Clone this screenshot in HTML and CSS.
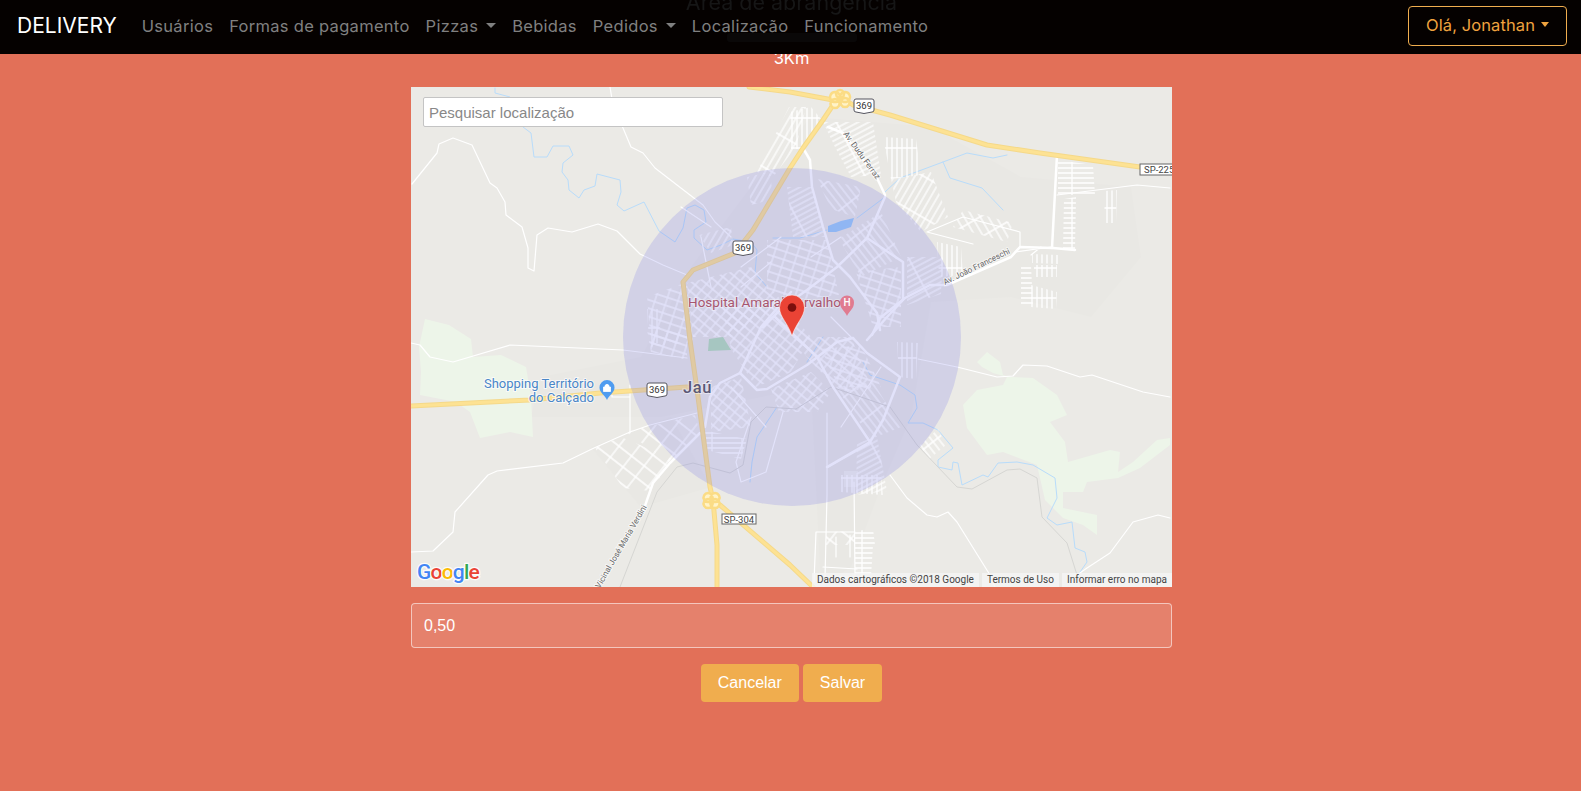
FILE: index.html
```html
<!DOCTYPE html>
<html lang="pt-BR">
<head>
<meta charset="utf-8">
<title>Delivery - Área de abrangência</title>
<link rel="stylesheet" href="styles.css">
</head>
<body>
<nav class="navbar">
  <a class="brand" href="#">DELIVERY</a>
  <ul class="nav-list">
    <li><a href="#">Usuários</a></li>
    <li><a href="#">Formas de pagamento</a></li>
    <li><a href="#" class="has-caret">Pizzas</a></li>
    <li><a href="#">Bebidas</a></li>
    <li><a href="#" class="has-caret">Pedidos</a></li>
    <li><a href="#">Localização</a></li>
    <li><a href="#">Funcionamento</a></li>
  </ul>
  <button class="user-btn" type="button">Olá, Jonathan<span class="user-caret"></span></button>
</nav>
<main class="content">
  <h2 class="title">Área de abrangência</h2>
  <div class="slider"></div>
  <p class="km">3Km</p>
  <div class="map">
    <svg class="map-svg" viewBox="0 0 761 500" width="761" height="500" xmlns="http://www.w3.org/2000/svg">
      <defs>
        <pattern id="st1" width="6" height="34" patternUnits="userSpaceOnUse" patternTransform="rotate(12)"><path class="pl" d="M1 0V34M0 1H6"/></pattern>
        <pattern id="st2" width="6" height="30" patternUnits="userSpaceOnUse" patternTransform="rotate(-38)"><path class="pl" d="M1 0V30M0 1H6"/></pattern>
        <pattern id="st3" width="6" height="36" patternUnits="userSpaceOnUse" patternTransform="rotate(30)"><path class="pl" d="M1 0V36M0 1H6"/></pattern>
        <pattern id="st4" width="5" height="40" patternUnits="userSpaceOnUse" patternTransform="rotate(62)"><path class="pl" d="M1 0V40M0 1H5"/></pattern>
        <pattern id="st5" width="5" height="30" patternUnits="userSpaceOnUse"><path class="pl" d="M1 0V30M0 1H5"/></pattern>
        <pattern id="st6" width="30" height="5" patternUnits="userSpaceOnUse"><path class="pl" d="M0 1H30M1 0V5"/></pattern>
        <pattern id="gr1" width="8" height="8" patternUnits="userSpaceOnUse" patternTransform="rotate(40)"><path class="pl" d="M0 1H8M1 0V8"/></pattern>
        <pattern id="gr2" width="11" height="8" patternUnits="userSpaceOnUse" patternTransform="rotate(18)"><path class="pl" d="M0 1H11M1 0V8"/></pattern>
        <pattern id="gr3" width="16" height="14" patternUnits="userSpaceOnUse" patternTransform="rotate(38)"><path class="pl" d="M0 1H16M1 0V14"/></pattern>
        <pattern id="gr4" width="7" height="18" patternUnits="userSpaceOnUse" patternTransform="rotate(-30)"><path class="pl" d="M0 1H7M1 0V18"/></pattern>
      </defs>
      <rect class="land" width="761" height="500"/>
      <path class="urban" d="M400 30L520 40L610 90L720 100L730 170L680 230L600 210L520 215L500 330L470 400L440 480L410 500L400 300L250 330L120 330L130 290L230 270L280 180L340 100Z"/>
      <path class="urban" d="M180 360L260 330L300 400L230 420Z"/>
      <path class="green" d="M14 232L38 238L60 252L62 270L90 268L115 280L120 310L122 350L99 345L69 351L59 325L45 315L9 308L10 285L8 260Z"/>
      <path class="green" d="M566 275L576 265L589 275L592 288L599 290L622 291L646 308L656 328L639 335L654 355L657 375L699 363L709 365L707 385L722 375L746 353L759 351L759 358L729 381L707 391L676 395L672 405L652 405L652 421L686 428L686 448L672 438L652 431L634 413L626 378L592 365L576 368L556 341L552 318L566 303L592 298L596 290L582 286L571 280Z"/>
      <path class="park" d="M298 252L312 250L320 263L297 264Z"/>

      <path class="river" d="M84 1L84 6L99 10L112 40L120 46L123 70L136 70L142 59L158 59L162 68L152 76L151 85L157 93L158 103L168 111L173 103L184 99L186 87L209 93L210 105L206 118L213 124L233 115L248 144L264 155L272 141L276 121L284 118L293 123L295 135L283 143L283 151L296 163L310 158L322 152L340 155L346 163L344 186L356 200"/>
      <path class="river" d="M452 275L459 288L489 298L504 308L506 321L497 336L512 336L527 343L542 361L527 373L527 380L541 383L542 375L547 376L551 398L572 388L577 390L587 376L606 375L622 378L644 391L646 411L636 431L646 438L661 435L664 461L674 465L676 475L667 488"/>
      <path class="river" d="M474 105L489 91L532 75L556 66L582 71L596 68M532 75L539 91L571 101L592 123"/>
      <path class="river" d="M474 110L446 131M416 143L389 151L362 151M366 320L346 350L341 375L339 395M412 250L396 275"/>
      <path class="lake" d="M417 139L430 134L443 131L440 140L425 145L417 145Z"/>

      <g class="blocks">
        <path fill="url(#gr1)" d="M310 215L370 215L400 250L380 285L345 300L320 262Z"/>
        <path fill="url(#gr1)" d="M380 250L440 250L460 300L425 300L400 275Z"/>
        <path fill="url(#gr2)" d="M356 153L416 153L428 208L392 212L356 205Z"/>
        <path fill="url(#st4)" d="M376 100L402 100L414 150L382 150Z"/>
        <path fill="url(#st3)" d="M336 90L359 85L362 112L340 118Z"/>
        <path fill="url(#st3)" d="M346 85L378 20L395 20L385 60L362 90Z"/>
        <path fill="url(#st5)" d="M379 25L400 20L410 32L392 62L380 62Z"/>
        <path fill="url(#st2)" d="M406 92L450 100L444 130L420 122Z"/>
        <path fill="url(#st2)" d="M428 152L470 125L490 170L450 190Z"/>
        <path fill="url(#st4)" d="M496 170L532 170L530 207L496 218Z"/>
        <path fill="url(#st5)" d="M526 155L550 160L552 188L528 190Z"/>
        <path fill="url(#gr2)" d="M445 185L490 180L490 240L462 240Z"/>
        <path fill="url(#gr2)" d="M236 210L276 195L282 255L240 260Z"/>
        <path fill="url(#gr1)" d="M276 196L340 180L372 215L320 250L282 250Z"/>
        <path fill="url(#st3)" d="M288 148L320 140L322 158L300 166Z"/>
        <path fill="url(#st5)" d="M236 222L248 222L250 256L238 256Z"/>
        <path fill="url(#gr2)" d="M236 243L276 245L276 273L240 265Z"/>
        <path fill="url(#gr1)" d="M300 300L330 290L340 340L300 345Z"/>
        <path fill="url(#gr1)" d="M360 302L400 285L420 305L406 325L368 325Z"/>
        <path fill="url(#st2)" d="M425 300L462 295L490 340L460 352Z"/>
        <path fill="url(#gr2)" d="M410 262L450 258L470 300L430 305Z"/>
        <path fill="url(#st5)" d="M486 255L507 256L505 292L488 290Z"/>
        <path fill="url(#gr3)" d="M184 361L210 350L262 372L239 404L212 401Z"/>
        <path fill="url(#gr3)" d="M215 345L284 328L289 346L258 375Z"/>
        <path fill="url(#st6)" d="M292 343L336 352L330 372L292 362Z"/>
        <path fill="url(#st4)" d="M446 356L466 350L476 404L445 408Z"/>
        <path fill="url(#st5)" d="M430 388L470 388L472 408L430 405Z"/>
        <path fill="url(#st2)" d="M509 358L527 342L535 358L517 373Z"/>
        <path fill="url(#st4)" d="M412 35L462 35L470 88L440 90L424 60Z"/>
        <path fill="url(#st5)" d="M472 50L505 52L510 88L480 92Z"/>
        <path fill="url(#st3)" d="M480 92L520 85L537 130L510 145L485 115Z"/>
        <path fill="url(#gr4)" d="M552 123L602 136L596 155L542 140Z"/>
        <path fill="url(#st6)" d="M647 73L682 78L684 108L647 108Z"/>
        <path fill="url(#st5)" d="M694 104L706 103L705 136L693 136Z"/>
        <path fill="url(#st6)" d="M653 112L665 110L664 162L652 162Z"/>
        <path fill="url(#st5)" d="M621 167L647 168L647 177L621 176Z"/>
        <path fill="url(#st6)" d="M610 178L620 178L622 220L610 220Z"/>
        <path fill="url(#st5)" d="M620 198L646 205L645 222L620 220Z"/>
        <path fill="url(#st5)" d="M623 178L646 178L646 190L623 190Z"/>
        <path fill="url(#st6)" d="M444 460L462 458L460 490L444 490Z"/>
        <path fill="url(#st6)" d="M444 444L462 442L464 458L444 460Z"/>
        <path fill="url(#gr3)" d="M415 445L444 444L444 458L415 458Z"/>
        <path class="plaza" d="M433 384L447 384L447 400L433 400Z"/>
      </g>

      <g class="roads-thin">
        <path d="M1 97L26 66L28 57L42 51L61 58L79 96L86 101L94 115L95 128L111 140L117 161L117 181L123 184L126 148L137 141L161 145L187 137L206 144L229 167L252 178L276 188"/>
        <path d="M199 0L201 12L212 41L220 60L232 66L244 81L266 98L292 118L304 135L320 150"/>
        <path d="M507 272L546 280L586 290L602 289L612 278L636 279L669 290L681 288L732 305L759 310"/>
        <path d="M479 388L496 411L516 428L526 430L537 425L546 435L579 488L584 500"/>
        <path d="M666 488L676 481L699 466L722 435L747 428L759 431"/>
        <path d="M0 256L9 258L19 270L42 275L99 258L212 263L276 271"/>
        <path d="M0 465L22 464L42 445L44 425L77 388L86 384L152 376L183 361L219 345L239 338L286 326"/>
        <path d="M416 326L416 408L414 491M443 395L444 488M416 381L460 356"/>
        <path d="M201 310L219 310M201 298L201 310M219 298L219 345M646 108L726 98L759 101M516 145L552 130L609 145L609 160M516 145L562 157"/>
        <path d="M416 490L470 490M412 480L446 482M405 445L444 445M405 445L403 495M425 450L425 470M439 448L439 470"/>
        <path d="M604 165L640 160M630 160L620 168M340 330L325 375L330 395L355 385L372 325M320 300L355 340"/>
        <path d="M270 120L300 140M290 150L300 200M330 180L370 150"/>
        <path d="M430 150L400 170M360 175L330 200M470 280L430 340M420 230L450 260"/>
      </g>
      <path class="road-gray" d="M209 500L246 405L266 380L282 376L319 386L332 378L340 335L355 320L385 322M479 320L506 358L546 400L561 402L596 383L609 382L626 391L631 430L656 456L666 488L670 500M385 322L420 300L450 310L479 320"/>
      <g class="roads-main">
        <path d="M392 61L399 73L401 100L412 140L422 173L439 190L466 226L469 243"/>
        <path d="M474 110L456 151L426 180L396 203L372 220L352 240"/>
        <path d="M456 151L492 175L492 213L476 230L456 253"/>
        <path d="M536 198L519 198L494 211L469 231L461 248M536 198L600 170L609 160L642 161L664 163"/>
        <path d="M646 68L641 161"/>
        <path d="M417 40L432 46L466 91L474 108"/>
        <path d="M329 286L346 303L356 302L396 278L426 255L442 251"/>
        <path d="M442 251L456 266L489 290L472 333L459 355L416 380"/>
        <path d="M406 270L422 300L459 355"/>
        <path d="M329 286L309 296L299 310L294 340"/>
        <path d="M289 346L259 376L242 396L236 413L232 425"/>
        <path d="M380 205L350 240L329 286M364 230L406 270"/>
      </g>
      <g class="hw">
        <path class="hw-e" d="M338 0L379 5L422 13L431 11L442 18L479 28L576 58L629 66L729 80L761 84M422 18L412 33L392 61L379 81L342 143L324 166L282 183L272 195L279 253L287 310L299 400L302 413L306 458L306 500M0 319L119 313L189 306L276 300M309 418L379 478L402 500"/>
        <path class="hw-f" d="M338 0L379 5L422 13L431 11L442 18L479 28L576 58L629 66L729 80L761 84M422 18L412 33L392 61L379 81L342 143L324 166L282 183L272 195L279 253L287 310L299 400L302 413L306 458L306 500M0 319L119 313L189 306L276 300M309 418L379 478L402 500"/>
        <path class="hw-loop" d="M424 5A5 5 0 1 0 424.100 5ZM434 5A5 5 0 1 0 434.100 5ZM424 12A4.500 4.500 0 1 0 424.100 12ZM434 11A4.500 4.500 0 1 0 434.100 11ZM429 3A4 4 0 1 0 429.100 3Z"/>
        <path class="hw-loop" d="M297 406A4.500 4.500 0 1 0 297.100 406ZM304 406A4.500 4.500 0 1 0 304.100 406ZM297 412A4.500 4.500 0 1 0 297.100 412ZM304 412A4.500 4.500 0 1 0 304.100 412Z"/>
      </g>
      <circle class="radius" cx="381" cy="250" r="169"/>

      <g class="shield" transform="translate(453 19)"><path d="M-8 -7H8Q10 -7 10 -5V4Q10 6 8 6Q0 9 -8 6Q-10 6 -10 4V-5Q-10 -7 -8 -7Z"/><text y="3">369</text></g>
      <g class="shield" transform="translate(332 161)"><path d="M-8 -7H8Q10 -7 10 -5V4Q10 6 8 6Q0 9 -8 6Q-10 6 -10 4V-5Q-10 -7 -8 -7Z"/><text y="3">369</text></g>
      <g class="shield" transform="translate(246 303)"><path d="M-8 -7H8Q10 -7 10 -5V4Q10 6 8 6Q0 9 -8 6Q-10 6 -10 4V-5Q-10 -7 -8 -7Z"/><text y="3">369</text></g>
      <g class="tag"><rect x="729" y="77" width="36" height="11"/><text x="733" y="86">SP-225</text></g>
      <g class="tag"><rect x="311" y="427" width="34" height="10"/><text x="328" y="436" class="mid">SP-304</text></g>

      <text class="street" transform="translate(432 47) rotate(54)">Av. Dudu Ferraz</text>
      <text class="street" transform="translate(534 198) rotate(-26)">Av. João Franceschi</text>
      <text class="street end" transform="translate(236 420) rotate(-60)">Vicinal José Maria Verdini</text>

      <text class="poi-hosp" x="277" y="220">Hospital Amaral Carvalho</text>
      <path class="poi-h" d="M436 229C434 224 429 222 429 215.500A7 7 0 1 1 443 215.500C443 222 438 224 436 229Z"/>
      <text class="poi-h-t" x="436" y="219">H</text>
      <text class="city" x="272" y="306">Jaú</text>
      <text class="poi-shop" x="183" y="301">Shopping Território</text>
      <text class="poi-shop" x="183" y="315">do Calçado</text>
      <path class="poi-s" d="M196 313C194 308 188.500 306 188.500 300.500A7.500 7.500 0 1 1 203.500 300.500C203.500 306 198 308 196 313Z"/>
      <path class="poi-bag" d="M192.500 300H199.500V304.500H192.500ZM194 300V298.500Q196 296 198 298.500V300"/>

      <path class="pin" d="M381 249C377 236 368.500 230 368.500 220.500A12.500 12.500 0 1 1 393.500 220.500C393.500 230 385 236 381 249Z"/>
      <circle class="pin-dot" cx="381" cy="220.500" r="4.300"/>

      <text class="logo" x="6" y="492"><tspan class="g-b">G</tspan><tspan class="g-r">o</tspan><tspan class="g-y">o</tspan><tspan class="g-b">g</tspan><tspan class="g-g">l</tspan><tspan class="g-r">e</tspan></text>
    </svg>
    <input class="map-search" type="text" placeholder="Pesquisar localização">
    <div class="attribution">
      <span>Dados cartográficos ©2018 Google</span>
      <span>Termos de Uso</span>
      <span>Informar erro no mapa</span>
    </div>
  </div>
  <input class="price" type="text" value="0,50">
  <div class="actions">
    <button class="btn" type="button">Cancelar</button>
    <button class="btn" type="button">Salvar</button>
  </div>
</main>
</body>
</html>
```
FILE: styles.css
```css
* { box-sizing: border-box; }
html, body { margin: 0; padding: 0; }
body {
  background: #e27058;
  color: #fff;
  font-family: Inter, "Liberation Sans", sans-serif;
  min-height: 791px;
  overflow: hidden;
}
a { text-decoration: none; color: inherit; }

.navbar {
  position: fixed;
  top: 0; left: 0; right: 0;
  height: 54px;
  z-index: 1;
  background: #050100;
  display: flex;
  align-items: center;
  padding: 0 14px 0 17px;
}
.brand { color: #fff; font-size: 21px; line-height: 30px; margin: 0 25px 3px 0; white-space: nowrap; }
.nav-list { list-style: none; display: flex; margin: 0 auto 3px 0; padding: 0; gap: 16px; }
.nav-list a { color: #808080; font-size: 16.500px; line-height: 24px; letter-spacing: .3px; white-space: nowrap; display: flex; align-items: center; }
.has-caret::after {
  content: "";
  margin-left: 8px;
  border-top: 5px solid currentColor;
  border-left: 5px solid transparent;
  border-right: 5px solid transparent;
}
.user-btn {
  height: 40px;
  width: 159px;
  margin-bottom: 2px;
  background: transparent;
  border: 1px solid #f0ad4e;
  border-radius: 4px;
  color: #f0a33f;
  font: 16.500px/24px Inter, sans-serif;
  letter-spacing: .1px;
  padding: 0 0 3px;
  display: flex;
  align-items: center;
  justify-content: center;
}
.user-caret {
  margin-left: 6px;
  border-top: 5px solid currentColor;
  border-left: 4.500px solid transparent;
  border-right: 4.500px solid transparent;
}

.content { display: flex; flex-direction: column; align-items: center; padding-left: 2px; }
.title {
  position: relative;
  z-index: 2;
  margin: -11px 0 0;
  font-size: 21.500px;
  line-height: 26px;
  font-weight: 400;
  color: #161616;
  white-space: nowrap;
}
.slider {
  position: relative;
  z-index: 2;
  width: 130px;
  height: 9px;
  margin-top: 18px;
  background: #0a0808;
  border-radius: 3px;
}
.km { margin: 4px 0 0; font-size: 16.500px; line-height: 24px; }

.map { position: relative; width: 761px; height: 500px; margin-top: 17px; overflow: hidden; flex: none; }
.map-svg { display: block; }
.map-search {
  position: absolute;
  top: 10px; left: 12px;
  width: 300px; height: 30px;
  padding: 0 5px;
  border: 1px solid #c4c4c4;
  border-radius: 2px;
  background: #fff;
  font: 15px "Liberation Sans", Arial, sans-serif;
  color: #333;
}
.map-search::placeholder { color: #888; opacity: 1; }
.attribution { position: absolute; right: 0; bottom: 0; display: flex; gap: 3px; font: 10px/14px Roboto, sans-serif; color: #444; }
.attribution span { background: rgba(245,245,245,.8); padding: 0 5px; white-space: nowrap; }

.price {
  width: 761px;
  height: 45px;
  margin-top: 16px;
  padding: 0 12px;
  background: rgba(255,255,255,.12);
  border: 1px solid rgba(255,255,255,.55);
  border-radius: 4px;
  color: #fff;
  font: 16px "Liberation Sans", Arial, sans-serif;
}
.actions { display: flex; gap: 4px; margin-top: 16px; }
.btn {
  height: 38px;
  padding: 0 17px;
  background: #f0ad4e;
  border: 0;
  border-radius: 4px;
  color: #fff;
  font: 16px "Liberation Sans", Arial, sans-serif;
}

/* map */
.land { fill: #ebeae6; }
.urban { fill: #e9e8e4; }
.green { fill: #edf5e9; }
.park { fill: #b5dcb8; }
.plaza { fill: #fff; opacity: .35; }
.pl { stroke: #fff; stroke-width: 1.300; fill: none; }
.river, .roads-thin path, .roads-main path, .road-gray, .hw path { fill: none; stroke-linejoin: round; stroke-linecap: round; }
.river { stroke: #b8dcfb; stroke-width: 1; }
.lake { fill: #99c8f7; }
.roads-thin path { stroke: #fff; stroke-width: 1.200; }
.roads-main path { stroke: #fff; stroke-width: 2.500; }
.road-gray { stroke: #d6d6d3; stroke-width: 1; }
.hw-e { stroke: #f5d98a; stroke-width: 5; }
.hw-f { stroke: #fde293; stroke-width: 3; }
.hw .hw-loop { stroke: #fbdc85; stroke-width: 2.500; fill: #fff3c8; }
.radius { fill: #7070e6; fill-opacity: .2; }
.shield path { fill: #fff; stroke: #55555f; stroke-width: 1; }
.shield text { font: 9.500px Roboto, sans-serif; fill: #333; text-anchor: middle; }
.tag rect { fill: #fff; stroke: #666; stroke-width: 1; }
.tag text { font: 9.500px Roboto, sans-serif; fill: #444; }
.tag .mid { text-anchor: middle; }
.street { font: 8.200px Roboto, sans-serif; fill: #666; paint-order: stroke; stroke: rgba(255,255,255,.6); stroke-width: 2px; }
.street.end { text-anchor: end; }
.poi-hosp { font: 13.500px Roboto, sans-serif; fill: #a8566f; paint-order: stroke; stroke: rgba(255,255,255,.35); stroke-width: 2px; }
.poi-h { fill: #e07b90; }
.poi-h-t { font: 500 10px Roboto, sans-serif; fill: #fff; text-anchor: middle; }
.city { font: 500 16.500px Roboto, sans-serif; fill: #5b5877; letter-spacing: .6px; paint-order: stroke; stroke: rgba(255,255,255,.45); stroke-width: 2px; }
.poi-shop { font: 13px Roboto, sans-serif; fill: #4a86c8; text-anchor: end; paint-order: stroke; stroke: rgba(255,255,255,.7); stroke-width: 2px; }
.poi-s { fill: #4f9cf0; }
.poi-bag { fill: #fff; stroke: #fff; stroke-width: .8; }
.pin { fill: #ea4335; stroke: #fff; stroke-opacity: .55; stroke-width: 1; }
.pin-dot { fill: #7a0f0d; }
.logo { font: 500 21px Roboto, sans-serif; paint-order: stroke; stroke: rgba(255,255,255,.85); stroke-width: 2.500px; letter-spacing: -.8px; }
.g-b { fill: #4285f4; }
.g-r { fill: #ea4335; }
.g-y { fill: #fbbc05; }
.g-g { fill: #34a853; }
```
